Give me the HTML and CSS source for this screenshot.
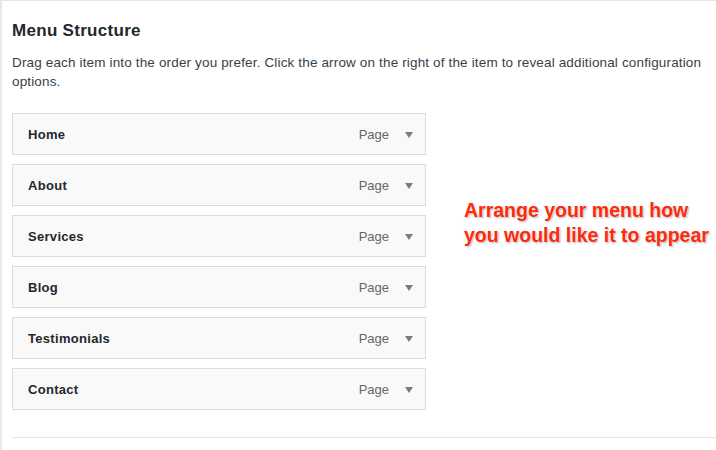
FILE: index.html
```html
<!DOCTYPE html>
<html>
<head>
<meta charset="utf-8">
<link rel="stylesheet" href="styles.css">
</head>
<body>
<div class="panel">
  <h2 class="title">Menu Structure</h2>
  <p class="desc">Drag each item into the order you prefer. Click the arrow on the right of the item to reveal additional configuration options.</p>
  <div class="row">
    <ul class="menu">
      <li class="item"><span class="name">Home</span><span class="type">Page</span><span class="arrow"></span></li>
      <li class="item"><span class="name">About</span><span class="type">Page</span><span class="arrow"></span></li>
      <li class="item"><span class="name">Services</span><span class="type">Page</span><span class="arrow"></span></li>
      <li class="item"><span class="name">Blog</span><span class="type">Page</span><span class="arrow"></span></li>
      <li class="item"><span class="name">Testimonials</span><span class="type">Page</span><span class="arrow"></span></li>
      <li class="item"><span class="name">Contact</span><span class="type">Page</span><span class="arrow"></span></li>
    </ul>
    <div class="note">Arrange your menu how<br>you would like it to appear</div>
  </div>
  <div class="divider"></div>
</div>
</body>
</html>
```
FILE: styles.css
```css
html, body {
  margin: 0;
  padding: 0;
  background: #fff;
  font-family: "Liberation Sans", Arial, sans-serif;
  color: #23282d;
}
.panel {
  width: 714px;
  height: 449px;
  border-top: 1px solid #e5e5e5;
  border-left: 2px solid #e8e8e8;
  padding-left: 10px;
  box-sizing: content-box;
}
.title {
  margin: 0;
  padding-top: 20px;
  font-size: 17px;
  letter-spacing: 0.3px;
  line-height: 20px;
  font-weight: bold;
  color: #23282d;
}
.desc {
  margin: 12px 0 0;
  font-size: 13.5px;
  letter-spacing: 0.15px;
  line-height: 19px;
  color: #3a3f44;
  width: 704px;
}
.row {
  display: flex;
  margin-top: 22px;
}
.menu {
  list-style: none;
  margin: 0;
  padding: 0;
  display: flex;
  flex-direction: column;
  gap: 9px;
  width: 414px;
  flex: none;
}
.item {
  box-sizing: border-box;
  height: 42px;
  border: 1px solid #dcdcdc;
  background: #f9f9f9;
  display: flex;
  align-items: center;
  padding: 0 12px 0 15px;
}
.name {
  flex: 1;
  font-size: 13px;
  letter-spacing: 0.3px;
  font-weight: bold;
  color: #23282d;
}
.type {
  font-size: 13px;
  color: #666;
  margin-right: 16px;
}
.arrow {
  width: 0;
  height: 0;
  border-left: 4px solid transparent;
  border-right: 4px solid transparent;
  border-top: 6px solid #787c82;
  margin-top: 1px;
}
.note {
  margin: 85px 0 0 38px;
  font-size: 19.5px;
  line-height: 25px;
  font-weight: bold;
  color: #fc2a0c;
  text-shadow: 0 0 2px #fff, 1px 1px 2px rgba(0,0,0,0.35);
  white-space: nowrap;
}
.divider {
  margin-top: 27px;
  border-top: 1px solid #e5e5e5;
}
```
